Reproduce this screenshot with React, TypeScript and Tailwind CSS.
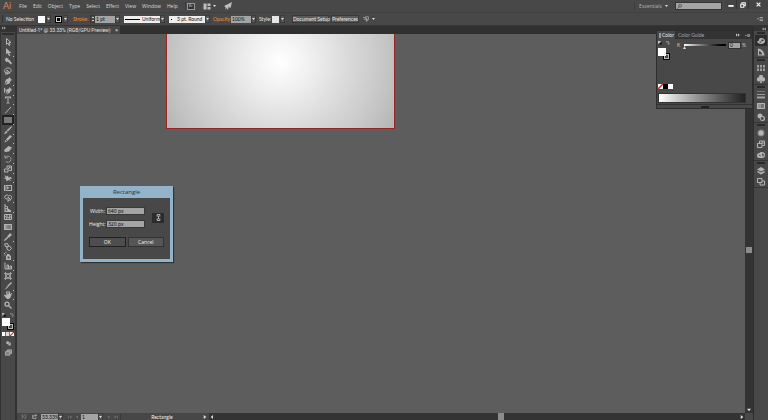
import { useState, type ReactNode } from "react";

const MENUS = ["File", "Edit", "Object", "Type", "Select", "Effect", "View", "Window", "Help"];

interface Tool {
  name: string;
  icon: ReactNode;
  more?: boolean;
}

// every drawing uses a 16x16 grid, filled with the current colour
const line = { fill: "none", stroke: "currentColor", strokeWidth: 2 };

const TOOLS: Tool[] = [
  { name: "Selection", icon: <path {...line} d="M5 1v12l3-3 2 5 2-1-2-5h4z" /> },
  { name: "Direct Selection", more: true, icon: <path d="M4 0v13l3-3 3 6 3-1-3-5h5z" /> },
  { name: "Magic Wand", icon: <path d="M5 0l1 3 3-1-1 3 3 1 5 7-2 2-7-6-2 2-1-3-3 0 2-2-2-3 3 0z" /> },
  { name: "Lasso", icon: <path {...line} d="M3 12C-1 6 3 2 8 2s8 4 5 8c-2 3-7 3-9 1m2-5v9l2-3h4zM4 12l-1 3" /> },
  { name: "Pen", more: true, icon: <path d="M10 0l6 6-3 2-2 5-9 3 5-6-1-1-5 6L4 5l5-2z" /> },
  { name: "Curvature", more: true, icon: <path d="M11 0l5 6-3 2-2 4-7 3 4-5-1-1-4 5 2-9 5-2zM0 3l2-2 1 6-3 6z" /> },
  { name: "Type", more: true, icon: <path d="M2 1h12v4h-2l-1-2H9v10l2 1v1H5v-1l2-1V3H5L4 5H2z" /> },
  { name: "Line Segment", more: true, icon: <path {...line} d="M2 15L14 2" /> },
  { name: "Rectangle", more: true, icon: <path d="M0 2h16v12H0z" opacity="0.6" /> },
  { name: "Paintbrush", more: true, icon: <path d="M15 0l1 2-8 9-3-2zM4 10l3 2c-1 3-4 4-7 3 2-1 2-4 4-5z" /> },
  { name: "Pencil", more: true, icon: <path d="M12 0l4 3-9 9-3-3zM3 10l3 3-5 2z" /> },
  { name: "Eraser", more: true, icon: <path d="M9 2l7 3-6 8-8 1-2-4z" /> },
  { name: "Rotate", more: true, icon: <path {...line} strokeDasharray="3 1" d="M3 5a6 6 0 1 1 0 7M2 1v5h5" /> },
  { name: "Scale", more: true, icon: <path {...line} d="M1 8h7v6H1zM6 6V2h9v9h-5M8 8l4-4M9 4h3v3" /> },
  { name: "Width", more: true, icon: <path d="M1 2l4 3 3-2 1 4 5-1 2 3-5 1 4 4-6-2-4 3-1-5-4-1 3-2z" /> },
  { name: "Free Transform", icon: <path d="M0 2h3v12H0zM4 2h12v2H4zM4 12h12v2H4zM14 4h2v8h-2zM5 4l7 4-4 1-3 3z" /> },
  { name: "Shape Builder", more: true, icon: <path {...line} d="M6 10a4 4 0 1 1 3-6 4 4 0 1 1 3 7M8 6v9l2-3h4z" /> },
  { name: "Perspective Grid", more: true, icon: <path d="M1 0h2v3l5 2v4l6 4v3H1zM3 5v3l3 1V6zM3 10v3l4 1-1-3z" fillRule="evenodd" /> },
  { name: "Mesh", icon: <path {...line} d="M1 3h14v10H1zM1 9c3-5 5 4 14-2M5 3c3 5-1 6 1 10M11 3c2 5-2 5 0 10" /> },
  {
    name: "Gradient",
    icon: (
      <>
        <path d="M0 2h16v12H0z" opacity="0.5" />
        <path d="M0 2h6v12H0z" opacity="0.5" />
        <path {...line} d="M1 3h14v10H1z" />
      </>
    ),
  },
  { name: "Eyedropper", more: true, icon: <path d="M12 0l4 4-4 3 0 2-2-1-7 7-3 1 1-3 7-7-1-2 2 0z" /> },
  { name: "Blend", icon: <path {...line} d="M1 2l6-1 2 5-5 2zM6 8l5-2 4 5-4 4-5-2z" /> },
  { name: "Symbol Sprayer", more: true, icon: <path d="M6 4h5v2l3 2v8H4V8l2-2zM0 2h2v2H0zM3 0h2v2H3zM1 5h2v2H1zM7 9v4h4V9z" fillRule="evenodd" /> },
  { name: "Column Graph", more: true, icon: <path {...line} d="M2 1v13h13V8h-3v6M6 14V6h3v8" /> },
  { name: "Artboard", icon: <path {...line} strokeWidth="1.5" d="M3 0v16M13 0v16M0 3h16M0 13h16M5 5h6v6H5z" /> },
  { name: "Slice", more: true, icon: <path d="M14 0l2 2-8 8-2-2zM6 9l2 2-7 5z" /> },
  { name: "Hand", more: true, icon: <path d="M4 1h2v5h1V0h2v6h1V1h2v6l2-3 2 1-3 8-3 3H6L0 9l1-2 4 2z" /> },
  { name: "Zoom", icon: <path {...line} strokeWidth="2.5" d="M6 2a4 4 0 1 1 0 8 4 4 0 1 1 0-8M9 9l6 6" /> },
];

const DOCK: Tool[][] = [
  [
    { name: "Color", icon: <path d="M8 2c5 0 8 3 8 6s-3 6-8 6-8-3-8-6c2 1 4 0 4-2s1-4 4-4zm1 3v3h4V5zM5 9v2h4V9z" fillRule="evenodd" /> },
    { name: "Color Guide", icon: <path d="M2 1c8 1 12 6 13 14H2zm2 5v7h6C10 9 8 7 4 6z" fillRule="evenodd" /> },
  ],
  [
    { name: "Swatches", icon: <path d="M0 2h4v5H0zM6 2h4v5H6zM12 2h4v5h-4zM0 9h4v5H0zM6 9h4v5H6zM12 9h4v5h-4z" opacity="0.8" /> },
    { name: "Symbols", icon: <path d="M8 0a3 3 0 0 1 3 5 4 4 0 1 1-2 6l1 5H6l1-5A4 4 0 1 1 5 5a3 3 0 0 1 3-5z" /> },
  ],
  [
    { name: "Stroke", icon: <path d="M0 1h16v1H0zM0 6h16v2H0zM0 11h16v4H0z" opacity="0.8" /> },
    {
      name: "Gradient",
      icon: (
        <>
          <path d="M0 2h16v12H0z" opacity="0.4" />
          <path d="M0 2h8v12H0z" opacity="0.5" />
          <path {...line} d="M1 3h14v10H1z" />
        </>
      ),
    },
    { name: "Transparency", icon: <path d="M6 1a5 5 0 0 1 5 5 5 5 0 1 1-5 5A5 5 0 1 1 6 1zm4 7a3 3 0 1 0 1 0z" fillRule="evenodd" /> },
  ],
  [
    {
      name: "Appearance",
      icon: (
        <>
          <circle cx="8" cy="8" r="7" opacity="0.5" />
          <circle cx="8" cy="8" r="5" />
        </>
      ),
    },
    { name: "Graphic Styles", icon: <path {...line} d="M5 7V2h10v9h-4M1 7h9v8H1zM8 4h4v4" /> },
    { name: "Creative Cloud", icon: <path d="M5 4a5 5 0 0 1 5-2 6 6 0 1 1 0 12H5A5 5 0 0 1 5 4zm0 3a2 2 0 1 0 3 3zm5-2 1 6a3 3 0 0 0-1-6z" fillRule="evenodd" /> },
  ],
  [
    { name: "Layers", icon: <path d="M8 0l8 5-8 4-8-4zM2 8l6 3 6-3 2 2-8 5-8-5z" /> },
    { name: "Artboards", icon: <path {...line} d="M1 1h9v8H1zM6 9v5h9V6h-5" /> },
  ],
];

function Glyph({ children, className = "size-2" }: { children: ReactNode; className?: string }) {
  return (
    <svg viewBox="0 0 16 16" fill="currentColor" aria-hidden="true" className={`shrink-0 ${className}`}>
      {children}
    </svg>
  );
}

function Caret({ boxed = true }: { boxed?: boolean }) {
  return (
    <span
      className={`flex h-2 w-[5px] shrink-0 items-center justify-center ${
        boxed ? "border border-[#3c3c3c] bg-[#555]" : ""
      }`}
    >
      <svg viewBox="0 0 6 4" aria-hidden="true" className="h-[2px] w-[3px] shrink-0 overflow-visible">
        <path d="M0 0h6L3 4z" fill="#e0e0e0" />
      </svg>
    </span>
  );
}

function MenuBar() {
  return (
    <header className="flex h-[13px] shrink-0 items-center border-b border-[#404040] text-[5px] text-[#d8d8d8]">
      <span className="w-[19px] pl-[3px] text-[9px] leading-[12px] text-[#c98d68]">Ai</span>
      <nav className="flex gap-[6px] font-['Open_Sans','Noto_Sans',sans-serif]">
        {MENUS.map((menu) => (
          <button key={menu}>{menu}</button>
        ))}
      </nav>
      <div className="ml-[7px] flex items-center gap-2 border-l border-[#3c3c3c] text-[#bdbdbd]">
        <button aria-label="Bridge" className="ml-px flex h-[7px] w-2 items-center justify-center border border-[#999] bg-[#333] text-[4px]">
          Br
        </button>
        <button aria-label="Arrange Documents" className="flex items-center gap-px">
          <Glyph className="h-[7px] w-2">
            <path d="M0 1h7v14H0zM9 1h7v6H9zM9 9h7v6H9z" />
          </Glyph>
          <Caret boxed={false} />
        </button>
        <button aria-label="GPU Performance" className="-ml-px">
          <Glyph>
            <path d="M16 0L13 12 9 10l-1 6-3-4-2 3 0-5-3-2 6-3z" />
          </Glyph>
        </button>
      </div>
      <div className="ml-auto flex h-full items-center">
        <button className="flex items-center gap-[2px] border-l border-[#3c3c3c] pl-1 font-['Open_Sans','Noto_Sans',sans-serif] text-[#b4b4b4]">
          Essentials <Caret boxed={false} />
        </button>
        <label className="ml-[6px] flex h-2 w-[47px] items-center border border-[#333] bg-[#a4a4a4] text-[#333]">
          <Glyph className="ml-px size-[5px]">
            <path {...line} d="M10 1a4 4 0 1 1 0 9 4 4 0 1 1 0-9M7 9l-6 6" />
          </Glyph>
          <input aria-label="Search" className="w-full min-w-0 outline-none" />
        </label>
        <div className="ml-[3px] flex h-[9px] gap-px self-start bg-[#353535] text-[#f2f2f2]">
          <button aria-label="Minimize" className="flex w-[11px] items-center justify-center bg-[#444]">
            <Glyph className="size-[6px]">
              <path d="M1 8h14v5H1z" />
            </Glyph>
          </button>
          <button aria-label="Restore" className="flex w-[11px] items-center justify-center bg-[#444]">
            <Glyph className="size-[6px]">
              <path {...line} strokeWidth="3" d="M5 5V2h9v8h-3M2 6h8v8H2z" />
            </Glyph>
          </button>
          <button aria-label="Close" className="flex w-[19px] items-center justify-center bg-[#444]">
            <Glyph className="size-[5px]">
              <path {...line} strokeWidth="4" d="M2 2l12 12M14 2L2 14" />
            </Glyph>
          </button>
        </div>
      </div>
    </header>
  );
}

function ControlBar() {
  return (
    <div className="flex h-[13px] shrink-0 items-center border-b border-[#353535] text-[5px] text-[#e6e6e6]">
      <span className="mx-[2px] h-2 w-px bg-[#333]" />
      <span className="w-[33px] whitespace-nowrap pl-px">No Selection</span>
      <button aria-label="Fill" className="flex items-center gap-px">
        <span className="size-[7px] bg-white" />
        <Caret />
      </button>
      <button aria-label="Stroke color" className="ml-1 flex items-center gap-px">
        <span className="flex size-[7px] items-center justify-center bg-black">
          <span className="size-[5px] border border-[#ccc]" />
        </span>
        <Caret />
      </button>
      <label htmlFor="stroke-width" className="ml-[5px] w-[17px] text-[#ea9038]">
        Stroke:
      </label>
      <span className="flex h-2 w-[5px] shrink-0 flex-col items-center justify-center gap-[2px] border border-[#383838]">
        <span className="h-px w-[2px] bg-[#ccc]" />
        <span className="h-px w-[2px] bg-[#ccc]" />
      </span>
      <input id="stroke-width" defaultValue="1 pt" className="h-[7px] w-[20px] bg-[#a4a4a4] pl-px text-[#111] outline-none" />
      <Caret />
      <div className="ml-1 flex h-[7px] w-9 items-center bg-[#eee] text-[#111]">
        <span className="ml-px h-px w-[15px] bg-black" />
        <select aria-label="Width profile" className="min-w-0 flex-1 appearance-none pl-[2px] outline-none">
          <option>Uniform</option>
        </select>
      </div>
      <Caret />
      <div className="ml-1 flex h-[7px] w-9 items-center bg-[#eee] text-[#111]">
        <span className="ml-[2px] size-px bg-black" />
        <select aria-label="Brush definition" className="min-w-0 flex-1 appearance-none pl-[5px] outline-none">
          <option>3 pt. Round</option>
        </select>
      </div>
      <Caret />
      <label htmlFor="opacity" className="ml-[3px] w-[18px] text-[#ea9038]">
        Opacity:
      </label>
      <input id="opacity" defaultValue="100%" className="h-[7px] w-[20px] bg-[#a4a4a4] pl-px text-[#111] outline-none" />
      <Caret />
      <span className="ml-[3px] w-[13px]">Style:</span>
      <button aria-label="Graphic style" className="flex items-center gap-px">
        <span className="size-[7px] bg-[#e6e6e6]" />
        <Caret />
      </button>
      <button className="ml-[7px] h-2 w-[37px] whitespace-nowrap border border-[#393939] bg-[#5a5a5a] text-center leading-[6px]">
        Document Setup
      </button>
      <button className="ml-[2px] h-2 w-[28px] border border-[#393939] bg-[#5a5a5a] leading-[6px]">Preferences</button>
      <button aria-label="Select similar objects" className="ml-[4px] flex items-center gap-[2px] text-[#aaa]">
        <Glyph className="size-[6px]">
          <path {...line} d="M0 4h6M2 9h4M7 2h8v7H7zM9 5v10l2-3h3" />
        </Glyph>
        <Caret boxed={false} />
      </button>
      <button aria-label="Control panel menu" className="ml-auto mr-[5px] text-[#b5b5b5]">
        <Glyph className="size-[6px]">
          <path d="M0 6h5l-2 4zM7 3h9v2H7zM7 7h9v2H7zM7 11h9v2H7z" />
        </Glyph>
      </button>
    </div>
  );
}

function Toolbar({ active, onSelect }: { active: string; onSelect: (name: string) => void }) {
  return (
    <aside className="flex w-[17px] shrink-0 flex-col items-center border-l border-r-2 border-[#333] bg-[#484848] text-[#b4b4b4]">
      <div className="h-[6px] w-full shrink-0 bg-[#333] text-[#aaa]">
        <Glyph className="ml-px size-1">
          <path d="M0 2l7 6-7 6zM8 2l7 6-7 6z" />
        </Glyph>
      </div>
      <span className="mt-px h-[2px] w-3 shrink-0 bg-[#2d2d2d]" />
      <div className="mt-[2px] flex h-[273px] w-3 shrink-0 flex-col">
        {TOOLS.map((tool) => (
          <button
            key={tool.name}
            aria-label={tool.name}
            onClick={() => onSelect(tool.name)}
            className={`relative flex flex-1 items-center justify-center ${
              active === tool.name ? "bg-[#222]" : ""
            }`}
          >
            <Glyph>{tool.icon}</Glyph>
            {tool.more && <span className="absolute bottom-0 right-0 size-px bg-[#bbb]" />}
          </button>
        ))}
      </div>
      <div className="mb-px mt-[3px] flex w-3 shrink-0 justify-between">
        <Glyph className="size-1">
          <path d="M0 0h10v10H0z" />
          <path d="M6 6h9v9H6z" fill="#111" />
        </Glyph>
        <Glyph className="size-1">
          <path {...line} d="M1 3h10v10M4 0L1 3l3 3M8 10l3 4 3-4" />
        </Glyph>
      </div>
      <FillStroke />
      <div className="mt-[2px] flex h-[4px] w-3 shrink-0">
        <span className="w-1 border-r border-[#777] bg-white" />
        <span className="w-1 border-r border-[#777] bg-[#ddd]" />
        <NoneSwatch className="size-1" />
      </div>
      <button aria-label="Drawing mode" className="mt-[5px]">
        <Glyph className="size-[5px]">
          <path d="M5 1a5 5 0 0 1 5 4h5v9H8v-4H5A4 4 0 0 1 5 1zm3 6v2h3V7z" fillRule="evenodd" />
        </Glyph>
      </button>
      <button aria-label="Screen mode" className="mt-[3px]">
        <Glyph className="size-[7px]">
          <path d="M5 2h10v8h-4v4H1V6h4z" opacity="0.5" />
          <path {...line} d="M5 5V2h10v8h-4M1 6h10v8H1z" />
        </Glyph>
      </button>
    </aside>
  );
}

function FillStroke() {
  return (
    <div className="relative h-3 w-3 shrink-0">
      <span className="absolute bottom-0 right-0 size-[7px] border border-black bg-black">
        <span className="block size-[5px] border border-[#bbb] bg-[#484848]" />
      </span>
      <span className="absolute left-0 top-0 size-2 bg-white" />
    </div>
  );
}

function NoneSwatch({ className }: { className: string }) {
  return (
    <svg viewBox="0 0 10 10" aria-hidden="true" className={`bg-white ${className}`}>
      <path d="M0 10L10 0" stroke="#e02020" strokeWidth="3" />
    </svg>
  );
}

function ColorPanel() {
  const [black, setBlack] = useState("0");

  return (
    <section className="absolute right-[15px] top-[4px] w-[97px] border border-[#2e2e2e] bg-[#484848] text-[5px] text-[#ccc]">
      <div className="flex h-[8px] items-center bg-[#333]">
        <button className="flex h-full w-[18px] items-center gap-px bg-[#484848] pl-[2px] text-[#e8e8e8]">
          <span className="h-[5px] w-[2px] border border-[#999]" />
          Color
        </button>
        <button className="ml-[3px] text-[#a6a6a6]">Color Guide</button>
        <Glyph className="ml-auto size-1">
          <path d="M0 2l7 6-7 6zM8 2l7 6-7 6z" />
        </Glyph>
        <Glyph className="ml-[5px] mr-[2px] size-[5px]">
          <path d="M0 6h5l-2 4zM7 3h9v2H7zM7 7h9v2H7zM7 11h9v2H7z" />
        </Glyph>
      </div>
      <div className="flex h-[45px] pl-px pt-[2px]">
        <div className="w-3">
          <div className="mb-[3px] flex justify-between">
            <Glyph className="size-1">
              <path d="M0 0h10v10H0z" />
              <path d="M6 6h9v9H6z" fill="#111" />
            </Glyph>
            <Glyph className="size-1">
              <path {...line} d="M1 3h10v10M4 0L1 3l3 3M8 10l3 4 3-4" />
            </Glyph>
          </div>
          <FillStroke />
        </div>
        <div className="ml-[7px] flex h-2 flex-1 items-center">
          <label htmlFor="black-value" className="w-[7px]">
            K
          </label>
          <div className="relative h-[2px] w-[42px] bg-linear-to-r from-white to-black">
            <svg viewBox="0 0 6 6" aria-hidden="true" className="absolute -left-px top-[2px] size-[3px]">
              <path d="M3 0l3 6H0z" fill="#ddd" />
            </svg>
            <input
              type="range"
              aria-label="Black"
              min="0"
              max="100"
              value={Number(black) || 0}
              onChange={(e) => setBlack(e.target.value)}
              className="absolute inset-0 w-full opacity-0"
            />
          </div>
          <input
            id="black-value"
            value={black}
            onChange={(e) => setBlack(e.target.value)}
            className="ml-[2px] h-[7px] w-[13px] border border-[#333] bg-[#a4a4a4] pl-px text-[#111] outline-none"
          />
          <span className="ml-px">%</span>
        </div>
      </div>
      <div className="ml-px flex h-[5px] w-[15px]">
        <NoneSwatch className="size-[5px]" />
        <span className="w-[5px] bg-black" />
        <span className="w-[5px] bg-white" />
      </div>
      <div className="ml-px mr-[6px] mt-[4px] h-[10px] border border-[#333] bg-linear-to-r from-white to-[#222]" />
      <div className="mt-px flex h-1 items-center justify-center border-t border-[#333]">
        <span className="h-[2px] w-2 bg-[#222]" />
      </div>
    </section>
  );
}

function Dock() {
  return (
    <aside className="flex w-[15px] shrink-0 flex-col items-center border-l border-[#2e2e2e] bg-[#484848] text-[#b4b4b4]">
      <div className="flex h-[5px] w-full shrink-0 items-center justify-end bg-[#333] pr-[2px]">
        <Glyph className="size-1">
          <path d="M7 2L0 8l7 6zM15 2L8 8l7 6z" />
        </Glyph>
      </div>
      {DOCK.map((group, i) => (
        <div key={i} className="flex w-full flex-col items-center border-b border-[#363636]">
          <span className="mt-px h-[2px] w-2 bg-[#292929]" />
          <div className="mt-px flex flex-col">
            {group.map((panel) => (
              <button
                key={panel.name}
                aria-label={panel.name}
                className={`flex h-[11px] w-3 items-center justify-center ${
                  i === 0 && panel.name === "Color" ? "bg-[#2c2c2c]" : ""
                }`}
              >
                <Glyph>{panel.icon}</Glyph>
              </button>
            ))}
          </div>
        </div>
      ))}
    </aside>
  );
}

function RectangleDialog() {
  return (
    <form
      role="dialog"
      aria-labelledby="dialog-title"
      onSubmit={(e) => e.preventDefault()}
      className="absolute left-[63px] top-[152px] w-[93px] bg-[#93b3ca] px-[3px] pb-[3px] font-['Open_Sans','Noto_Sans',sans-serif] shadow-[1px_1px_1px_#333]"
    >
      <h2 id="dialog-title" className="text-center text-[6px] leading-3 text-[#26333d]">
        Rectangle
      </h2>
      <div className="bg-[#484848] px-[6px] pb-3 pt-[9px] text-[5px] text-[#f0f0f0]">
        <div className="flex items-center justify-between">
          <div className="flex flex-col gap-[5px]">
            <div className="flex items-center gap-px">
              <label htmlFor="rect-width" className="w-[16px] text-right">
                Width:
              </label>
              <input id="rect-width" defaultValue="640 px" className="h-[8px] w-[39px] border border-[#383838] bg-[#a4a4a4] pl-px text-black outline-none" />
            </div>
            <div className="flex items-center gap-px">
              <label htmlFor="rect-height" className="w-[16px] text-right">
                Height:
              </label>
              <input id="rect-height" defaultValue="320 px" className="h-[8px] w-[39px] border border-[#383838] bg-[#a4a4a4] pl-px text-black outline-none" />
            </div>
          </div>
          <button type="button" aria-label="Constrain proportions" className="flex h-[10px] w-3 items-center justify-center bg-[#2b2b2b] text-[#ccc]">
            <Glyph className="size-[7px]">
              <path {...line} d="M5 6V1h6v5M5 10v5h6v-5M8 4v8" />
            </Glyph>
          </button>
        </div>
        <div className="mt-[9px] flex gap-[2px]">
          <button className="h-[10px] flex-1 border border-[#222] bg-[#4e4e4e] leading-2">OK</button>
          <button type="button" className="h-[10px] flex-1 border border-[#333] bg-[#565656] leading-2">
            Cancel
          </button>
        </div>
      </div>
    </form>
  );
}

function StatusBar({ tool }: { tool: string }) {
  return (
    <footer className="flex h-[7px] shrink-0 items-center bg-[#474747] text-[5px] leading-[6px] text-[#ddd]">
      <div className="ml-[3px] flex w-[21px] gap-[5px] text-[#888]">
        <Glyph className="h-[5px] w-[7px]">
          <path {...line} d="M0 3h5v10H0M9 3h6v10H9M5 8h4" />
        </Glyph>
        <Glyph className="size-[5px] text-[#ccc]">
          <path {...line} d="M5 5H1v9h12v-4M5 10c0-5 3-6 8-6M10 0l5 4-5 4" />
        </Glyph>
      </div>
      <input aria-label="Zoom level" defaultValue="33.33%" className="h-[6px] w-[17px] bg-[#a4a4a4] pl-px text-[#111] outline-none" />
      <Caret />
      <div className="ml-[5px] flex w-[13px] gap-[3px] text-[#707070]">
        <Glyph className="size-1">
          <path d="M1 2h3v12H1zM14 2v12L5 8z" />
        </Glyph>
        <Glyph className="size-1">
          <path d="M12 2v12L3 8z" />
        </Glyph>
      </div>
      <input aria-label="Artboard number" defaultValue="1" className="h-[6px] w-[17px] bg-[#a4a4a4] pl-px text-[#111] outline-none" />
      <Caret />
      <div className="ml-[4px] flex w-[13px] gap-[3px] text-[#707070]">
        <Glyph className="size-1">
          <path d="M4 2v12l9-6z" />
        </Glyph>
        <Glyph className="size-1">
          <path d="M12 2h3v12h-3zM2 2v12l9-6z" />
        </Glyph>
      </div>
      <span className="w-[83px] border-l border-[#3a3a3a] text-center text-[#eee]">{tool}</span>
      <Glyph className="size-1">
        <path d="M3 0v16l10-8z" />
      </Glyph>
      <div className="ml-[2px] flex h-full flex-1 items-center justify-between bg-[#333]">
        <Glyph className="ml-px size-1">
          <path d="M12 0v16L3 8z" />
        </Glyph>
        <span className="ml-12 h-full w-[6px] bg-[#8c8c8c]" />
        <Glyph className="mr-px size-1">
          <path d="M3 0v16l10-8z" />
        </Glyph>
      </div>
      <span className="h-full w-2 bg-[#484848]" />
    </footer>
  );
}

export default function App() {
  const [tool, setTool] = useState("Rectangle");

  return (
    <div className="flex h-screen flex-col overflow-hidden bg-[#484848] font-[Lato,'Liberation_Sans',sans-serif] leading-none">
      <MenuBar />
      <ControlBar />
      <div className="relative flex min-h-0 flex-1">
        <Toolbar active={tool} onSelect={setTool} />
        <main className="flex min-w-0 flex-1 flex-col">
          <div className="flex h-2 shrink-0 bg-[#303030]">
            <div className="flex w-[103px] items-center justify-between whitespace-nowrap bg-[#464646] px-[2px] font-[Roboto,'Liberation_Sans',sans-serif] text-[5px] text-[#e2e2e2]">
              Untitled-1* @ 33.33% (RGB/GPU Preview)
              <button aria-label="Close document">×</button>
            </div>
          </div>
          <div className="flex min-h-0 flex-1">
            <div className="relative flex-1 overflow-hidden bg-[#5d5d5d]">
              <div className="absolute left-[149px] top-0 h-[95px] w-[229px] border border-t-0 border-[#992424] bg-[radial-gradient(circle_135px_at_50%_29%,#ffffff,#f0f0f0_22%,#dadada_50%,#c4c4c4_80%,#b2b2b2)]" />
              <RectangleDialog />
            </div>
            <div className="flex w-2 shrink-0 flex-col items-center justify-end bg-[#333] pb-px text-[#ddd]">
              <span className="mb-[155px] h-[6px] w-[6px] shrink-0 bg-[#8c8c8c]" />
              <Glyph className="size-1">
                <path d="M0 3h16L8 13z" />
              </Glyph>
            </div>
          </div>
          <StatusBar tool={tool} />
        </main>
        <Dock />
        <ColorPanel />
      </div>
    </div>
  );
}
